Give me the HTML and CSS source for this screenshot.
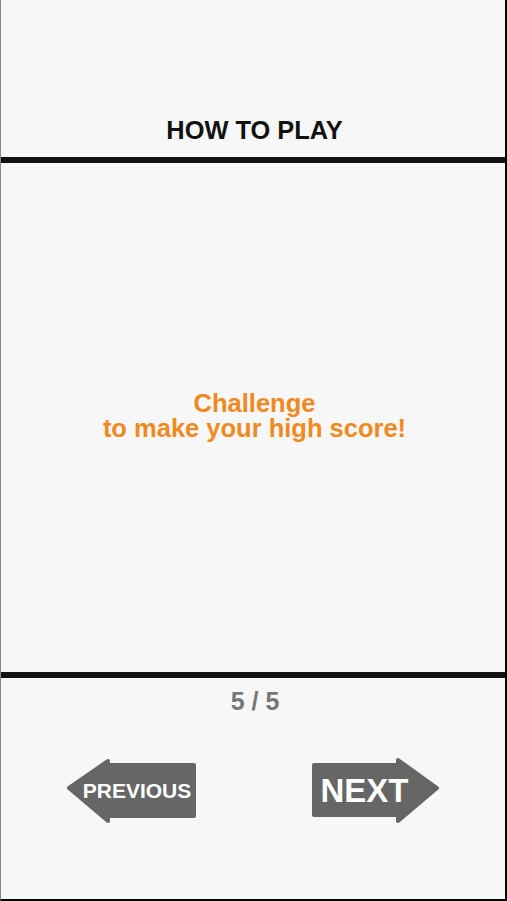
FILE: index.html
```html
<!DOCTYPE html>
<html lang="en">
<head>
  <meta charset="UTF-8">
  <title>How To Play</title>
  <link rel="stylesheet" href="styles.css">
</head>
<body>
  <div class="screen">
    <div class="header">
      <h1 class="title">HOW TO PLAY</h1>
    </div>
    <div class="rule"></div>

    <div class="content">
      <p class="tip">Challenge<br>to make your high score!</p>
    </div>
    <div class="rule"></div>

    <div class="footer">
      <div class="counter">5 / 5</div>
      <div class="nav">
        <!-- arrow pointing left -->
        <svg class="arrow-btn" width="132" height="68" viewBox="0 0 132 68">
          <path d="M3 31 L42 4 L42 8 L128 8 L128 59 L42 59 L42 64 Z" fill="#666" stroke="#666" stroke-width="4" stroke-linejoin="round"/>
          <text x="71" y="41" class="btn-label prev-label" text-anchor="middle">PREVIOUS</text>
        </svg>
        <!-- arrow pointing right -->
        <svg class="arrow-btn" width="132" height="68" viewBox="0 0 132 68">
          <path d="M4 8 L88 8 L88 3 L127 31 L88 64 L88 58 L4 58 Z" fill="#666" stroke="#666" stroke-width="4" stroke-linejoin="round"/>
          <text x="54.5" y="45" class="btn-label next-label" text-anchor="middle">NEXT</text>
        </svg>
      </div>
    </div>
  </div>
</body>
</html>
```

FILE: styles.css
```css
* {
  box-sizing: border-box;
}

body {
  margin: 0;
  padding: 0;
  background: #f7f7f7;
  font-family: 'Liberation Sans', Arial, sans-serif;
}

.screen {
  width: 507px;
  height: 901px;
  display: flex;
  flex-direction: column;
  background: #f7f7f7;
  border-left: 1px solid #888;
  border-right: 2px solid #000;
  border-bottom: 2px solid #000;
}

.header {
  height: 157px;
  display: flex;
  align-items: flex-end;
  justify-content: center;
  padding: 0 0 12px 3px;
}

.title {
  margin: 0;
  font-size: 25.4px;
  line-height: 29px;
  font-weight: bold;
  color: #111;
}

.rule {
  height: 6px;
  background: #111;
}

.content {
  height: 509px;
  display: flex;
  align-items: center;
  justify-content: center;
  padding: 0 0 4px 3px;
}

.tip {
  margin: 0;
  text-align: center;
  font-size: 25.5px;
  line-height: 25px;
  font-weight: bold;
  color: #ef8a23;
}

.footer {
  flex: 1;
}

.counter {
  padding: 9px 0 0 4px;
  text-align: center;
  font-size: 25px;
  line-height: 29px;
  font-weight: bold;
  color: #777;
}

.nav {
  display: flex;
  margin-top: 41px;
  padding-left: 65px;
  gap: 112px;
}

.arrow-btn {
  display: block;
  cursor: pointer;
}

.btn-label {
  fill: #fff;
  font-family: 'Liberation Sans', Arial, sans-serif;
  font-weight: bold;
}

.prev-label {
  font-size: 21px;
}

.next-label {
  font-size: 33px;
}
```
